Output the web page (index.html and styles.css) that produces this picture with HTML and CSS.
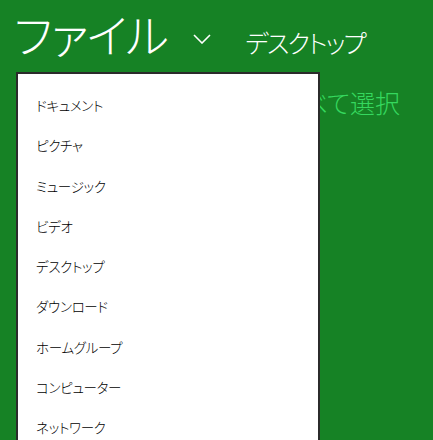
FILE: index.html
```html
<!DOCTYPE html>
<html lang="ja">
<head>
    <meta charset="UTF-8">
    <title>ファイル</title>
    <link rel="stylesheet" href="styles.css">
</head>
<body>
    <header class="picker-header">
        <h1 class="picker-title">ファイル</h1>
        <svg class="chevron" width="18" height="10" viewBox="0 0 18 10">
            <path d="M1 1 L9 9 L17 1" fill="none" stroke="#fff" stroke-width="1.6"/>
        </svg>
        <span class="location">デスクトップ</span>
    </header>

    <div class="picker-body">
        <span class="select-all">すべて選択</span>

        <!-- Location menu -->
        <ul class="location-menu">
            <li>ドキュメント</li>
            <li>ピクチャ</li>
            <li>ミュージック</li>
            <li>ビデオ</li>
            <li>デスクトップ</li>
            <li>ダウンロード</li>
            <li>ホームグループ</li>
            <li>コンピューター</li>
            <li>ネットワーク</li>
        </ul>
    </div>
</body>
</html>
```

FILE: styles.css
```css
html, body {
    overflow: hidden;
}
body {
    margin: 0;
    height: 440px;
    background-color: #168225;
    font-family: "Noto Sans CJK JP", "Noto Sans", sans-serif;
    font-feature-settings: "palt";
    color: #fff;
}
.picker-header {
    display: flex;
    align-items: center;
    height: 72px;
    padding-left: 14px;
}
.picker-title {
    margin: 0 0 6px;
    font-size: 46px;
    font-weight: 300;
    line-height: 66px;
    letter-spacing: -1.5px;
    white-space: nowrap;
}
.chevron {
    margin-left: 26px;
    margin-top: 6px;
}
.location {
    margin-left: 34px;
    font-size: 25px;
    font-weight: 300;
    letter-spacing: -1.8px;
    margin-top: 12px;
}
.picker-body {
    position: relative;
}
.select-all {
    position: absolute;
    right: 33px;
    top: 12px;
    font-size: 25px;
    font-weight: 300;
    color: #35d85e;
}
.location-menu {
    position: relative;
    list-style: none;
    margin: 0 0 0 16px;
    width: 304px;
    height: 368px;
    padding: 21px 0 0 18px;
    box-sizing: border-box;
    background: #fff;
    border: 2px solid #2b2b2b;
    border-bottom: none;
    color: #000;
}
.location-menu li {
    height: 40.25px;
    font-size: 13.5px;
    font-weight: 300;
    line-height: 20px;
    letter-spacing: -0.3px;
}
```
